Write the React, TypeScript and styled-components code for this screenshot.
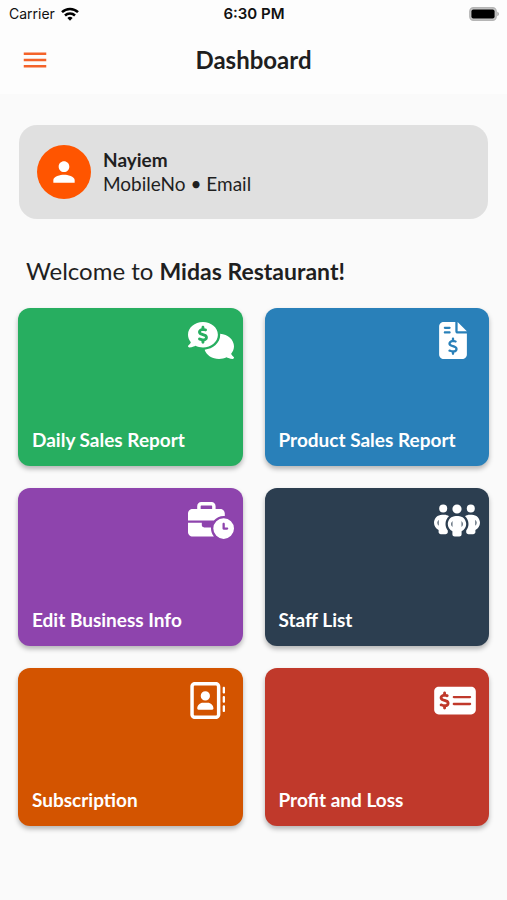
import React from "react";
import type { IconType } from "react-icons";
import {
  FaCommentsDollar,
  FaFileInvoiceDollar,
  FaBusinessTime,
  FaPeopleGroup,
  FaRegAddressBook,
  FaMoneyCheckDollar,
} from "react-icons/fa6";
import { MdMenu, MdPerson } from "react-icons/md";
import styled, { createGlobalStyle } from "styled-components";

const GlobalStyle = createGlobalStyle`
  * { box-sizing: border-box; }
  body {
    margin: 0;
    background: #fafafa;
    color: #1f1f1f;
    font-family: Lato, "Liberation Sans", sans-serif;
  }
`;

const Screen = styled.div`
  min-height: 100vh;
`;

const Top = styled.header`
  background: #fdfdfd;
`;

const StatusBar = styled.div`
  display: grid;
  grid-template-columns: 1fr auto 1fr;
  align-items: center;
  height: 27px;
  padding: 0 8px 0 9px;
  color: #111;
  font-family: Inter, "Liberation Sans", sans-serif;
  font-size: 14px;
  line-height: 20px;
`;

const Carrier = styled.span`
  display: flex;
  align-items: center;
  gap: 6px;
`;

const Time = styled.span`
  font-size: 15px;
  font-weight: 600;
`;

const Battery = styled.svg`
  justify-self: end;
`;

const AppBar = styled.div`
  display: grid;
  grid-template-columns: 1fr auto 1fr;
  align-items: center;
  height: 67px;
  padding: 0 20px 2px;
`;

const MenuButton = styled.button`
  display: flex;
  justify-self: start;
  padding: 0;
  border: 0;
  background: none;
  color: #f4632a;
  font-size: 30px;
  cursor: pointer;
`;

const Title = styled.h1`
  margin: 0;
  font-size: 24px;
  line-height: 32px;
  font-weight: 700;
`;

const Main = styled.main`
  padding: 31px 18px;
`;

const Profile = styled.section`
  display: flex;
  align-items: center;
  gap: 12px;
  height: 94px;
  margin: 0 1px;
  padding: 0 18px;
  border-radius: 18px;
  background: #e0e0e0;
`;

const Avatar = styled.div`
  display: flex;
  align-items: center;
  justify-content: center;
  width: 54px;
  height: 54px;
  border-radius: 50%;
  background: #ff5500;
  color: #fff;
  font-size: 32px;
`;

const Name = styled.div`
  font-size: 19px;
  line-height: 24px;
  font-weight: 700;
`;

const Contact = styled.div`
  font-size: 19px;
  line-height: 24px;
`;

const Welcome = styled.h2`
  margin: 36px 8px 21px;
  font-size: 24px;
  line-height: 32px;
  font-weight: 400;

  strong {
    font-size: 23px;
  }
`;

const Grid = styled.nav`
  display: grid;
  grid-template-columns: 1fr 1fr;
  gap: 22px;
`;

const Card = styled.button<{ $color: string }>`
  display: flex;
  flex-direction: column;
  justify-content: space-between;
  height: 158px;
  padding: 14px 9px 10px 14px;
  border: 0;
  border-radius: 12px;
  background: ${({ $color }) => $color};
  box-shadow: 0 3px 5px rgba(0, 0, 0, 0.28);
  color: #fff;
  font-family: inherit;
  text-align: left;
  cursor: pointer;
`;

const IconSlot = styled.span`
  display: flex;
  align-self: flex-end;
  width: 46px;
`;

const IconFrame = styled.span<{ $width: number }>`
  display: flex;
  flex-shrink: 0;
  justify-content: center;
  min-width: 37px;

  svg {
    flex-shrink: 0;
    width: ${({ $width }) => $width}px;
    height: 37px;
  }
`;

const CardLabel = styled.span`
  font-size: 19px;
  line-height: 32px;
  font-weight: 700;
  white-space: nowrap;
`;

const cards: { label: string; color: string; Icon: IconType; width: number }[] = [
  { label: "Daily Sales Report", color: "#27ae60", Icon: FaCommentsDollar, width: 46 },
  { label: "Product Sales Report", color: "#2980b9", Icon: FaFileInvoiceDollar, width: 28 },
  { label: "Edit Business Info", color: "#8e44ad", Icon: FaBusinessTime, width: 46 },
  { label: "Staff List", color: "#2c3e50", Icon: FaPeopleGroup, width: 46 },
  { label: "Subscription", color: "#d35400", Icon: FaRegAddressBook, width: 37 },
  { label: "Profit and Loss", color: "#c0392b", Icon: FaMoneyCheckDollar, width: 42 },
];

function WifiIcon() {
  return (
    <svg width="18" height="14" viewBox="0 0 18 14" fill="none" stroke="#000" strokeWidth="2.5" aria-hidden="true">
      <path d="M1 5.2a11.4 11.4 0 0 1 16 0" />
      <path d="M4 8.5a7.2 7.2 0 0 1 10 0" />
      <path d="M6.4 10.9a3.8 3.8 0 0 1 5.2 0L9 13.7z" fill="#000" stroke="none" />
    </svg>
  );
}

function BatteryIcon() {
  return (
    <Battery width="30" height="14" viewBox="0 0 30 14" aria-hidden="true">
      <rect x="0.8" y="0.8" width="26.4" height="12.4" rx="3.6" fill="#c8c8c8" stroke="#b5b5b5" strokeWidth="1.4" />
      <rect x="2.4" y="2.4" width="23.2" height="9.2" rx="2" fill="#000" />
      <path d="M28.3 4.8c1 .4 1.6 1.2 1.6 2.2s-.6 1.8-1.6 2.2z" fill="#a5a5a5" />
    </Battery>
  );
}

export default function App() {
  return (
    <Screen>
      <GlobalStyle />
      <Top>
        <StatusBar>
          <Carrier>
            Carrier
            <WifiIcon />
          </Carrier>
          <Time>6:30 PM</Time>
          <BatteryIcon />
        </StatusBar>
        <AppBar>
          <MenuButton type="button" aria-label="Open menu">
            <MdMenu />
          </MenuButton>
          <Title>Dashboard</Title>
        </AppBar>
      </Top>
      <Main>
        <Profile>
          <Avatar>
            <MdPerson />
          </Avatar>
          <div>
            <Name>Nayiem</Name>
            <Contact>MobileNo • Email</Contact>
          </div>
        </Profile>
        <Welcome>
          Welcome to <strong>Midas Restaurant!</strong>
        </Welcome>
        <Grid>
          {cards.map(({ label, color, Icon, width }) => (
            <Card key={label} type="button" $color={color}>
              <IconSlot>
                <IconFrame $width={width}>
                  <Icon />
                </IconFrame>
              </IconSlot>
              <CardLabel>{label}</CardLabel>
            </Card>
          ))}
        </Grid>
      </Main>
    </Screen>
  );
}
